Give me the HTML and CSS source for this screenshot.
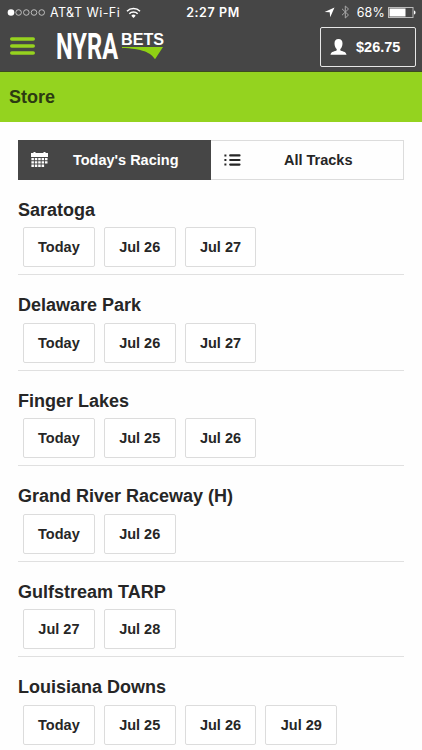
FILE: index.html
```
<!DOCTYPE html>
<html lang="en">
<head>
  <meta charset="UTF-8">
  <meta name="viewport" content="width=device-width, initial-scale=1.0">
  <title>NYRA Bets - Store</title>
  <link rel="stylesheet" href="styles.css">
</head>
<body>

  <header class="header">
    <div class="status-bar">
      <div class="status-left">
        <svg class="signal" width="39" height="9" viewBox="0 0 39 9">
          <circle class="full" cx="4" cy="4.5" r="3.3"/>
          <circle cx="11.6" cy="4.5" r="2.8"/>
          <circle cx="19.3" cy="4.5" r="2.8"/>
          <circle cx="27" cy="4.5" r="2.8"/>
          <circle cx="34.7" cy="4.5" r="2.8"/>
        </svg>
        <span class="carrier">AT&amp;T Wi-Fi</span>
        <svg class="wifi" width="15" height="11" viewBox="0 0 15 11">
          <path d="M1 4.2a9.2 9.2 0 0 1 13 0M3.3 6.7a6 6 0 0 1 8.4 0"/>
          <path class="dot" d="M5.3 8.7a3.1 3.1 0 0 1 4.4 0L7.5 11z"/>
        </svg>
      </div>
      <span class="clock">2:27 PM</span>
      <div class="status-right">
        <svg class="location" width="11" height="11" viewBox="0 0 11 11">
          <path d="M10.5.5L6.2 10.3 5.7 5.3.6 4.9z"/>
        </svg>
        <svg class="bluetooth" width="9" height="14" viewBox="0 0 9 14">
          <path d="M1 3.8L7.5 10 4.3 13V1L7.5 4 1 10.2"/>
        </svg>
        <span class="percent">68%</span>
        <svg class="battery" width="28" height="11" viewBox="0 0 28 11">
          <rect class="case" x=".5" y=".5" width="24.5" height="10"/>
          <rect class="level" x="1.5" y="1.5" width="16" height="8"/>
          <path class="level" d="M26 3.5c2 .6 2 3.4 0 4z"/>
        </svg>
      </div>
    </div>

    <div class="nav-bar">
      <svg class="menu" width="25" height="18" viewBox="0 0 25 18">
        <path d="M1.8 2h21.4M1.8 9h21.4M1.8 16h21.4"/>
      </svg>
      <svg class="logo" width="110" height="44" viewBox="0 -4 110 44">
        <text class="logo-nyra" x="0" y="29.2" transform="scale(.66 1)" textLength="94" lengthAdjust="spacingAndGlyphs">NYRA</text>
        <text class="logo-bets" x="65" y="15" textLength="43" lengthAdjust="spacingAndGlyphs">BETS</text>
        <path class="logo-swoosh" d="M66 17h41L99 29.300c-4-6.600-13-10.800-33-11.300z"/>
      </svg>
      <button class="account">
        <svg width="17" height="16" viewBox="0 0 17 16">
          <path d="M8.500 0C11.300 0 12.500 1.700 12.500 4.500c0 2.600-1 4.500-2.200 5.600v1.100c1.300 1.300 5.900.9 6.200 4.600H.5c.3-3.700 4.900-3.300 6.200-4.600v-1.100C5.500 9 4.500 7.100 4.500 4.500 4.500 1.700 5.700 0 8.500 0z"/>
        </svg>
        <span>$26.75</span>
      </button>
    </div>
  </header>

  <div class="title-bar">
    <h1>Store</h1>
  </div>

  <main class="content">
    <div class="tabs">
      <button class="tab active">
        <svg width="17" height="16" viewBox="0 0 17 16">
          <path d="M0 1h2.500V0h2v1h8V0h2v1H17v4H0z"/>
          <path d="M3.800 6h2.500v2.300H3.800zM7.200 6h2.500v2.300H7.200zM10.600 6h2.500v2.300h-2.500zM14 6h2.500v2.300H14zM.4 6h2.500v2.300H.4zM.4 9.300h2.500v2.300H.4zM3.800 9.300h2.500v2.300H3.800zM7.200 9.300h2.500v2.300H7.200zM10.600 9.300h2.500v2.300h-2.500zM14 9.300h2.500v2.300H14zM.4 12.600h2.500v2.400H.4zM3.800 12.600h2.500v2.400H3.800zM7.200 12.600h2.500v2.400H7.200zM10.600 12.600h2.500v2.400h-2.500z"/>
        </svg>
        <span>Today's Racing</span>
      </button>
      <button class="tab">
        <svg width="17" height="16" viewBox="0 0 17 16">
          <path d="M.4 2.400h2v2h-2zM.4 7h2v2h-2zM.4 11.600h2v2h-2z"/>
          <path class="lines" d="M6.200 3.400H15.500M6.200 8H15.500M6.200 12.600H15.500"/>
        </svg>
        <span>All Tracks</span>
      </button>
    </div>

    <section class="track">
      <h2>Saratoga</h2>
      <div class="dates">
        <button>Today</button>
        <button>Jul 26</button>
        <button>Jul 27</button>
      </div>
    </section>

    <section class="track">
      <h2>Delaware Park</h2>
      <div class="dates">
        <button>Today</button>
        <button>Jul 26</button>
        <button>Jul 27</button>
      </div>
    </section>

    <section class="track">
      <h2>Finger Lakes</h2>
      <div class="dates">
        <button>Today</button>
        <button>Jul 25</button>
        <button>Jul 26</button>
      </div>
    </section>

    <section class="track">
      <h2>Grand River Raceway (H)</h2>
      <div class="dates">
        <button>Today</button>
        <button>Jul 26</button>
      </div>
    </section>

    <section class="track">
      <h2>Gulfstream TARP</h2>
      <div class="dates">
        <button>Jul 27</button>
        <button>Jul 28</button>
      </div>
    </section>

    <section class="track">
      <h2>Louisiana Downs</h2>
      <div class="dates">
        <button>Today</button>
        <button>Jul 25</button>
        <button>Jul 26</button>
        <button>Jul 29</button>
      </div>
    </section>
  </main>

</body>
</html>
```
FILE: styles.css
```
* {
  box-sizing: border-box;
}

body {
  margin: 0;
  height: 750px;
  overflow: hidden;
  font-family: "Liberation Sans", Arial, sans-serif;
  background-color: #fefefe;
  color: #262626;
}

button {
  font-family: inherit;
  font-weight: bold;
  color: inherit;
  padding: 0;
  cursor: pointer;
}

svg {
  display: block;
  flex: none;
}

/* header */
.header {
  height: 72px;
  background-color: #464646;
  border-bottom: 1px solid #3c4a20;
  color: #fff;
}

.status-bar {
  display: grid;
  grid-template-columns: 1fr auto 1fr;
  align-items: center;
  height: 24px;
  padding: 0 6px 0 7px;
  font-family: Inter, "Liberation Sans", sans-serif;
  font-size: 12.5px;
}

.status-left, .status-right {
  display: flex;
  align-items: center;
}

.status-right {
  justify-content: flex-end;
}

.signal circle {
  fill: none;
  stroke: #d8d8d8;
  stroke-width: 0.8;
}

.signal .full {
  fill: #fff;
  stroke: none;
}

.carrier {
  margin-left: 4px;
  letter-spacing: 0.45px;
}

.wifi {
  margin-left: 6px;
}

.wifi path {
  fill: none;
  stroke: #fff;
  stroke-width: 1.6;
}

.wifi .dot {
  fill: #fff;
  stroke: none;
}

.clock {
  margin-left: 3px;
  font-weight: 600;
  letter-spacing: 0.6px;
}

.location {
  margin-right: 1px;
  fill: #fff;
}

.bluetooth {
  margin-left: 5px;
  fill: none;
  stroke: #a8a8a8;
}

.percent {
  margin: 0 3px 0 7px;
  letter-spacing: 0.2px;
}

.battery .case {
  fill: none;
  stroke: #bbb;
}

.battery .level {
  fill: #fff;
}

.nav-bar {
  display: flex;
  align-items: flex-start;
  padding: 3px 6px 0 10px;
}

.menu {
  margin-top: 10px;
  fill: none;
  stroke: #96d21f;
  stroke-width: 3.6;
  stroke-linecap: round;
}

.logo {
  margin: -1px auto 0 21px;
  overflow: visible;
}

.logo-nyra {
  font-family: Roboto, sans-serif;
  font-weight: bold;
  font-size: 36.5px;
  fill: #fff;
}

.logo-bets {
  font-family: "Liberation Sans", sans-serif;
  font-weight: bold;
  font-size: 16px;
  fill: #fff;
}

.logo-swoosh {
  fill: #8fd014;
}

.account {
  display: flex;
  align-items: center;
  gap: 9px;
  width: 96px;
  height: 40px;
  padding-left: 9px;
  border: 1px solid #e6e6e6;
  border-radius: 2px;
  background: none;
  font-size: 14.5px;
}

.account svg {
  fill: #fff;
}

.title-bar {
  height: 50px;
  padding: 0 9px;
  background-color: #94d31f;
}

h1 {
  margin: 0;
  font-size: 18px;
  line-height: 51px;
  color: #2c3a12;
}

/* page content */
.content {
  padding: 18px 18px 0;
}

.tabs {
  display: flex;
  height: 40px;
}

.tab {
  display: flex;
  align-items: center;
  flex: 1;
  padding: 0 7px 0 13px;
  border: 1px solid #dcdcdc;
  border-left: none;
  background: none;
  font-size: 14.5px;
}

.tab span {
  flex: 1;
  text-align: center;
}

.tab svg {
  fill: #262626;
}

.tab .lines {
  fill: none;
  stroke: #262626;
  stroke-width: 2.2;
  stroke-linecap: round;
}

.tab.active {
  background-color: #464646;
  border: none;
  color: #fff;
}

.tab.active svg {
  fill: #fff;
}

.track {
  height: 95.5px;
  padding-top: 19px;
  border-bottom: 1px solid #e0e0e0;
}

/* the first block sits a touch closer to the tabs */
.tabs + .track {
  height: 95px;
}

h2 {
  margin: 0 0 6.5px;
  font-size: 18px;
  line-height: 22px;
}

.tabs + .track h2 {
  margin-bottom: 6px;
}

.dates {
  display: flex;
  gap: 9px;
  padding-left: 5px;
}

.dates button {
  width: 71.800px;
  height: 40px;
  border: 1px solid #dcdcdc;
  border-radius: 2px;
  background-color: #fff;
  font-size: 14.5px;
}
```
